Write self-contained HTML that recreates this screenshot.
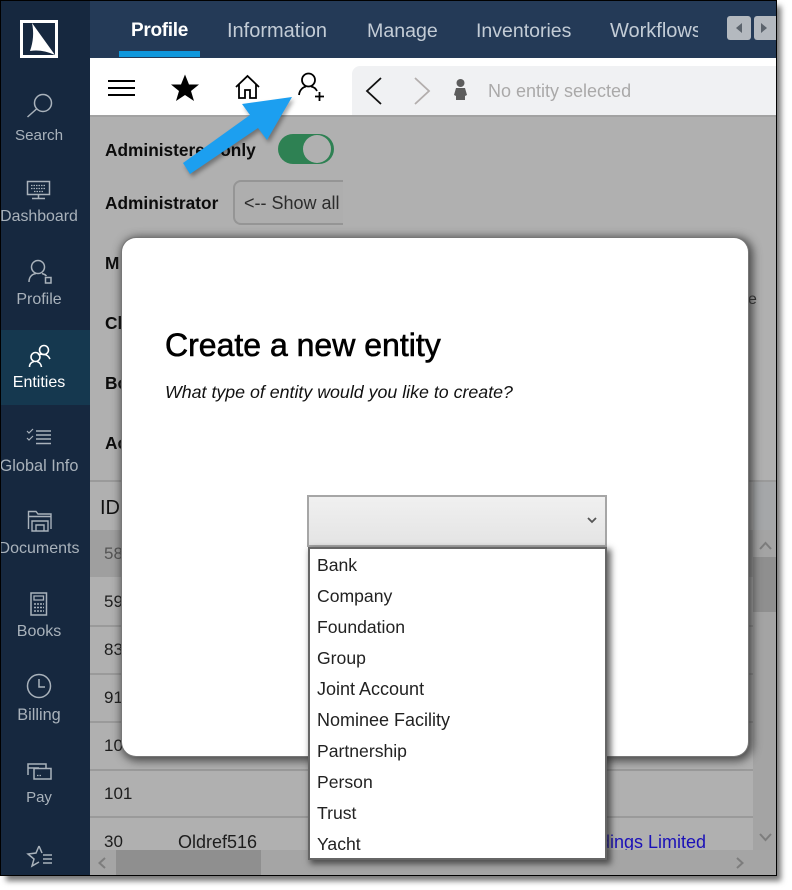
<!DOCTYPE html>
<html><head><meta charset="utf-8">
<style>
html,body{margin:0;padding:0;width:792px;height:890px;overflow:hidden;background:#fff}
body{font-family:"Liberation Sans",sans-serif;position:relative}
.a{position:absolute;white-space:nowrap}
.n{position:absolute;left:-6px;width:90px;text-align:center;font-size:16px;color:#a9b2bb;line-height:20px;white-space:nowrap}
.tab{position:absolute;top:19px;font-size:19.2px;color:#c3ccd6;line-height:24px;white-space:nowrap}
.line{position:absolute;left:90px;width:663px;height:2px;background:#9a9a9a}
.c{position:absolute;font-size:17px;color:#1d1d1d;line-height:20px;white-space:nowrap}
.b{position:absolute;font-size:17.3px;font-weight:bold;color:#0c0c0c;line-height:22px;white-space:nowrap}
.o{position:absolute;left:317px;font-size:17.6px;color:#222;line-height:22px;white-space:nowrap}
</style></head><body>
<!-- window shadow -->
<div class="a" style="left:6px;top:6px;width:775px;height:875px;background:#777;filter:blur(3px)"></div>
<!-- window -->
<div class="a" style="left:0;top:0;width:777px;height:876px;background:#b0b0b0;overflow:hidden"></div>
<!-- top nav -->
<div class="a" style="left:90px;top:1px;width:686px;height:57px;background:#243a57"></div>
<!-- toolbar -->
<div class="a" style="left:90px;top:58px;width:686px;height:58px;background:#fff"></div>
<div class="a" style="left:352px;top:66px;width:424px;height:49px;background:#f0f1f3;border-top-left-radius:8px"></div>
<div class="a" style="left:90px;top:115px;width:686px;height:2px;background:#a2a2a2"></div>
<!-- tabs -->
<div class="tab" style="left:131px;color:#fff;font-weight:bold;font-size:19px;letter-spacing:-.3px">Profile</div>
<div class="a" style="left:119px;top:51px;width:81px;height:6px;background:#0f97dc"></div>
<div class="tab" style="left:227px;font-size:20px">Information</div>
<div class="tab" style="left:367px;font-size:19.6px">Manage</div>
<div class="tab" style="left:476px;font-size:19.5px">Inventories</div>
<div class="tab" style="left:610px;width:88px;overflow:hidden;font-size:20px">Workflows</div>
<div class="a" style="left:727px;top:16px;width:24px;height:24px;background:#b4b9bf;border-radius:3px"></div>
<div class="a" style="left:754px;top:16px;width:22px;height:24px;background:#b4b9bf;border-radius:3px 0 0 3px"></div>
<svg class="a" style="left:727px;top:16px" width="49" height="24"><path d="M15 7 L9 12 L15 17Z M34 7 L40 12 L34 17Z" fill="#5b636c"/></svg>
<!-- toolbar icons -->
<svg class="a" style="left:100px;top:66px" width="240" height="46" viewBox="0 0 240 46">
<path d="M8 15H35M8 22H35M8 29H35" stroke="#000" stroke-width="2"/>
<path d="M85 8.500 L89 18.500 L99 18.500 L91 25 L94 35 L85 29 L76 35 L79 25 L71 18.500 L81 18.500Z" fill="#000"/>
<path d="M136 21 L147.500 10 L159 21 M139 18.500 V32 H145 V24 H150 V32 H156 V18.500" fill="none" stroke="#000" stroke-width="1.800"/>
<circle cx="208.500" cy="14" r="6.500" fill="none" stroke="#000" stroke-width="1.800"/>
<path d="M199 29 C199.500 24 203 21 206 20.500 M211 20.500 C214 21 216 23 217 25" fill="none" stroke="#000" stroke-width="1.800"/>
<path d="M215 30.500 H224 M219.500 26 V35" stroke="#000" stroke-width="1.800"/>
</svg>
<svg class="a" style="left:352px;top:66px" width="130" height="49"><path d="M29 12 L15 25 L29 38" fill="none" stroke="#111" stroke-width="1.800"/><path d="M63 12 L77 25 L63 38" fill="none" stroke="#b3aead" stroke-width="1.800"/><circle cx="108.500" cy="17" r="4" fill="#5d5d5d"/><path d="M104 22 H113 L115 29 L113 30 V34 H104 V30 L102 29Z" fill="#5d5d5d"/></svg>
<div class="a" style="left:488px;top:79px;font-size:18px;line-height:24px;color:#aaa9a9">No entity selected</div>
<!-- page content -->
<div class="b" style="left:105px;top:139px">Administered only</div>
<div class="a" style="left:278px;top:134px;width:56px;height:30px;background:#2e8153;border-radius:15px"></div>
<div class="a" style="left:303px;top:135px;width:28px;height:28px;background:#b0b0b0;border-radius:50%"></div>
<div class="b" style="left:105px;top:192px">Administrator</div>
<div class="a" style="left:233px;top:180px;width:108px;height:41px;border:2px solid #959595;border-right:none;border-radius:8px 0 0 8px;background:#aeaeae"></div>
<div class="a" style="left:244px;top:191px;font-size:18px;line-height:24px;color:#2c2c2c">&lt;-- Show all</div>
<div class="b" style="left:105px;top:252px">M</div>
<div class="b" style="left:105px;top:312px">Cl</div>
<div class="b" style="left:105px;top:372px">Bo</div>
<div class="b" style="left:105px;top:432px">Ac</div>
<div class="a" style="left:748px;top:290px;font-size:16px;color:#333;line-height:20px">e</div>
<!-- table -->
<div class="a" style="left:90px;top:480px;width:686px;height:2px;background:#9a9a9a"></div>
<div class="a" style="left:753px;top:482px;width:23px;height:48px;background:#a5a7a9"></div>
<div class="a" style="left:100px;top:496px;font-size:20px;line-height:24px;color:#111">ID</div>
<div class="a" style="left:90px;top:530px;width:663px;height:47px;background:#9f9f9f"></div>
<div class="line" style="top:625px"></div><div class="line" style="top:673px"></div><div class="line" style="top:721px"></div><div class="line" style="top:769px"></div><div class="line" style="top:816px"></div>
<div class="c" style="left:104px;top:544px;color:#555">58</div>
<div class="c" style="left:104px;top:592px">59</div>
<div class="c" style="left:104px;top:640px">83</div>
<div class="c" style="left:104px;top:688px">91</div>
<div class="c" style="left:104px;top:736px">10</div>
<div class="c" style="left:104px;top:784px">101</div>
<div class="c" style="left:104px;top:832px">30</div>
<div class="c" style="left:178px;top:832px;font-size:18px">Oldref516</div>
<div class="c" style="left:596px;top:832px;color:#1a10b8;font-size:18px">ldings Limited</div>
<!-- scrollbars -->
<div class="a" style="left:753px;top:530px;width:23px;height:320px;background:#a4a4a4"></div>
<div class="a" style="left:753px;top:557px;width:23px;height:55px;background:#8f8f8f"></div>
<div class="a" style="left:90px;top:850px;width:686px;height:25px;background:#a5a5a5"></div>
<div class="a" style="left:116px;top:850px;width:145px;height:25px;background:#8f8f8f"></div>
<svg class="a" style="left:90px;top:530px" width="686" height="345" fill="none" stroke="#7d7d7d" stroke-width="2"><path d="M670 19 L675.500 13 L681 19 M670 304 L675.500 310 L681 304 M15 328 L9.500 333 L15 338 M647 328 L652.500 333 L647 338"/></svg>
<!-- sidebar -->
<div class="a" style="left:1px;top:1px;width:89px;height:875px;background:#16283f"></div>
<div class="a" style="left:1px;top:330px;width:89px;height:75px;background:#15384f"></div>
<svg class="a" style="left:20px;top:20px" width="38" height="38" viewBox="0 0 38 38"><rect x="1.500" y="1.500" width="35" height="35" fill="#16283f" stroke="#fff" stroke-width="3"/><path d="M12 3 L35 35 Q22 29 10 31 Q15 17 12 3Z" fill="#fff"/></svg>
<svg class="a" style="left:1px;top:1px" width="89" height="875" viewBox="0 0 89 875" fill="none" stroke="#a9b2bb" stroke-width="1.500">
<circle cx="42" cy="102" r="8.500"/><path d="M35.500 108 L26.500 116"/>
<rect x="26.500" y="180.500" width="22" height="13"/><path d="M37.500 194 V197 M31 197.500 H44"/><path d="M30 184.500H45M30 187.500H45M33 190.500H42" stroke-width="1.300" stroke-dasharray="1.500 1"/>
<circle cx="37" cy="266" r="6.500"/><path d="M28 281 C28 275 32 273 35 272.500 M41 272.500 C43 273 44.500 274 45.500 275"/><rect x="44.500" y="276.500" width="5.500" height="5.500"/>
<g stroke="#fff" stroke-width="1.600"><circle cx="43" cy="349" r="4.500"/><path d="M37 354 C39 352.500 41 353.500 43 353.500 C46 353.500 48 356 49 358"/><circle cx="34.500" cy="356" r="4.500"/><path d="M28.500 366 C28.500 362.500 31 361 33 360.500 M36 360.500 C38 361 40 363 40.500 366"/></g>
<path d="M26 430 L28 432 L32 428 M26 437 L28 439 L32 435" stroke-width="1.200"/><path d="M35 430H50M35 434H50M35 438H50M35 442.500H50" stroke-width="1.600"/>
<path d="M27.500 528 V510.500 H35 L37 513 H50 V528 M27.500 515.500 H50 M31 530 H47 V520 H31Z M35 530 V524 H43 V530" stroke-width="1.400"/>
<rect x="30" y="592" width="15.500" height="22"/><path d="M33 595H42.500V599H33Z" stroke-width="1.300"/><path d="M33 603H43M33 606.500H43M33 610H43" stroke-width="1.600" stroke-dasharray="2 1"/>
<circle cx="38" cy="685" r="11.500"/><path d="M38 678 V686 H44"/>
<path d="M27 774 V763 H45 V767 M27 767 H38"/><rect x="33" y="767.500" width="17" height="10.500"/><path d="M36 774.500H41" stroke-dasharray="1.500 1" stroke-width="1.300"/>
<path d="M38 845 L35 852 L27 853 L33 858 L31 865 L38 861" /><path d="M38 845 L41 852 M42 854 H51 M42 858 H51 M42 862 H51"/>
</svg>
<div class="n" style="top:126px;font-size:15.2px">Search</div>
<div class="n" style="top:207px;font-size:15.9px">Dashboard</div>
<div class="n" style="top:290px">Profile</div>
<div class="n" style="top:373px;color:#fff">Entities</div>
<div class="n" style="top:456px;font-size:16.3px">Global Info</div>
<div class="n" style="top:539px;font-size:16px">Documents</div>
<div class="n" style="top:622px">Books</div>
<div class="n" style="top:705px;font-size:16.3px">Billing</div>
<div class="n" style="top:788px;font-size:15px">Pay</div>
<!-- window frame -->
<div class="a" style="left:0;top:0;width:775px;height:874px;border:1px solid #000"></div>
<!-- modal -->
<div class="a" style="left:122px;top:238px;width:626px;height:518px;background:#fff;border-radius:14px;box-shadow:0 0 0 1px #777,2px 2px 9px 3px rgba(40,40,40,.75)"></div>
<div class="a" style="left:165px;top:327px;font-size:32px;line-height:36px;color:#000;-webkit-text-stroke:.6px #000">Create a new entity</div>
<div class="a" style="left:165px;top:380px;font-size:17.8px;line-height:24px;font-style:italic;color:#111">What type of entity would you like to create?</div>
<!-- select -->
<div class="a" style="left:307px;top:495px;width:296px;height:48px;border:2px solid #a6a6a6;background:linear-gradient(#f0f0f0,#e4e4e4)"></div>
<svg class="a" style="left:585px;top:514px" width="14" height="12"><path d="M3 4 L7 8 L11 4" fill="none" stroke="#555" stroke-width="1.800"/></svg>
<div class="a" style="left:308px;top:547px;width:295px;height:309px;border:2px solid #666;background:#fff;box-shadow:3px 3px 6px 1px rgba(40,40,40,.7)"></div>
<div class="o" style="top:554px">Bank</div>
<div class="o" style="top:585px">Company</div>
<div class="o" style="top:616px">Foundation</div>
<div class="o" style="top:647px">Group</div>
<div class="o" style="top:678px;font-size:18px">Joint Account</div>
<div class="o" style="top:709px;font-size:18px">Nominee Facility</div>
<div class="o" style="top:740px">Partnership</div>
<div class="o" style="top:771px">Person</div>
<div class="o" style="top:802px">Trust</div>
<div class="o" style="top:833px">Yacht</div>
<!-- arrow -->
<svg class="a" style="left:0;top:0;filter:drop-shadow(2px 3px 2px rgba(0,0,0,.35))" width="320" height="190"><path d="M292 97 L242 104 L250 115 L183 163 L190 174 L258 128 L267 140 Z" fill="#1c9ff0"/></svg>
</body></html>
